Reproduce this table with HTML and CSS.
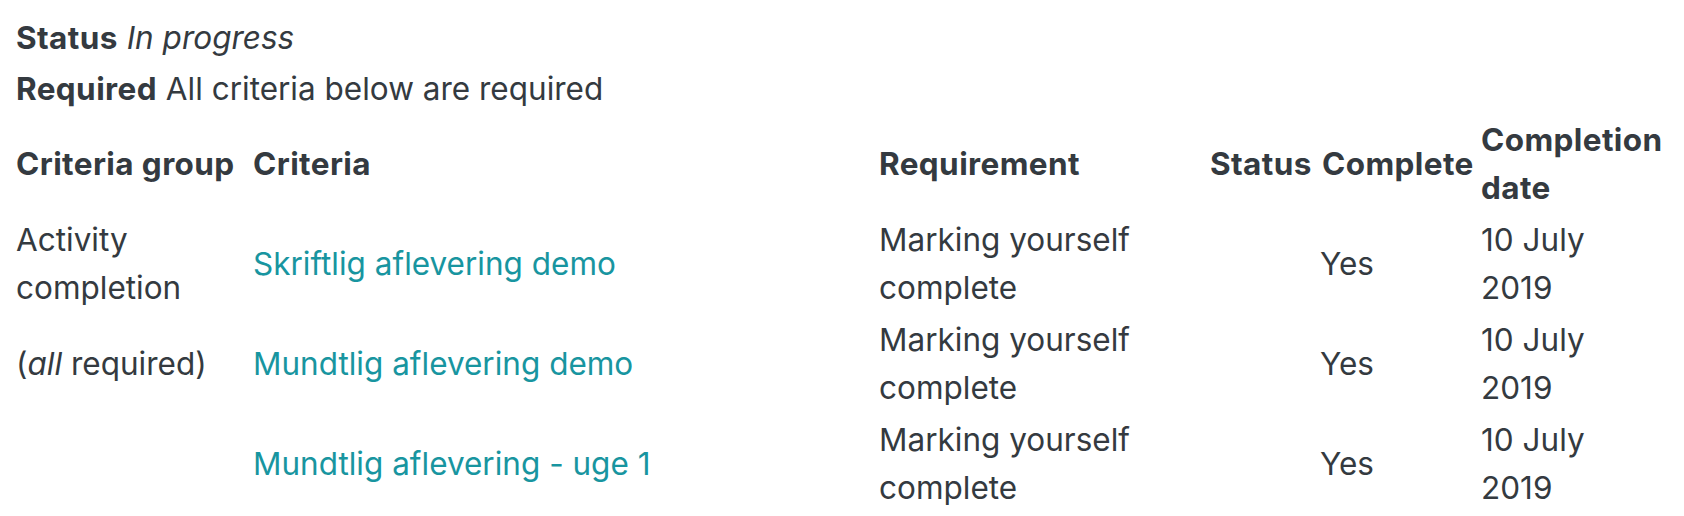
FILE: index.html
```html
<!DOCTYPE html>
<html lang="en">
<head>
<meta charset="utf-8">
<title>Completion status</title>
<link rel="stylesheet" href="styles.css">
</head>
<body>
<div class="page">
  <div class="summary">
    <div class="line"><b>Status</b> <i>In progress</i></div>
    <div class="line"><b>Required</b> All criteria below are required</div>
  </div>
  <table class="criteria">
    <colgroup>
      <col class="c1"><col class="c2"><col class="c3"><col class="c4"><col class="c5"><col class="c6">
    </colgroup>
    <thead>
      <tr>
        <th>Criteria group</th>
        <th>Criteria</th>
        <th>Requirement</th>
        <th>Status</th>
        <th>Complete</th>
        <th>Completion date</th>
      </tr>
    </thead>
    <tbody>
      <tr>
        <td>Activity completion</td>
        <td><a href="#">Skriftlig aflevering demo</a></td>
        <td>Marking yourself complete</td>
        <td class="yes" colspan="2">Yes</td>
        <td>10 July 2019</td>
      </tr>
      <tr>
        <td>(<i>all</i> required)</td>
        <td><a href="#">Mundtlig aflevering demo</a></td>
        <td>Marking yourself complete</td>
        <td class="yes" colspan="2">Yes</td>
        <td>10 July 2019</td>
      </tr>
      <tr>
        <td></td>
        <td><a href="#">Mundtlig aflevering - uge 1</a></td>
        <td>Marking yourself complete</td>
        <td class="yes" colspan="2">Yes</td>
        <td>10 July 2019</td>
      </tr>
    </tbody>
  </table>
</div>
</body>
</html>
```

FILE: styles.css
```css
html, body {
  margin: 0;
  padding: 0;
  background: #ffffff;
}
body {
  font-family: Inter, "Noto Sans", sans-serif;
  font-size: 31.5px;
  line-height: 48px;
  color: #343a40;
}
.page {
  padding: 14px 12px 0 16px;
}
.summary .line + .line {
  margin-top: 3px;
}
.summary b,
.criteria th {
  font-weight: 700;
  letter-spacing: 0.4px;
}
.criteria {
  margin-top: 1px;
  margin-left: -4px;
  border-collapse: collapse;
  table-layout: fixed;
  width: 1656px;
}
.c1 { width: 237px; }
.c2 { width: 626px; }
.c3 { width: 331px; }
.c4 { width: 112px; }
.c5 { width: 159px; }
.c6 { width: 191px; }
.criteria th,
.criteria td {
  padding: 2px 4px;
  text-align: left;
  vertical-align: middle;
}
.criteria td.yes {
  text-align: center;
  padding-left: 15px;
}
.criteria a {
  color: #1895a0;
  text-decoration: none;
}
```
